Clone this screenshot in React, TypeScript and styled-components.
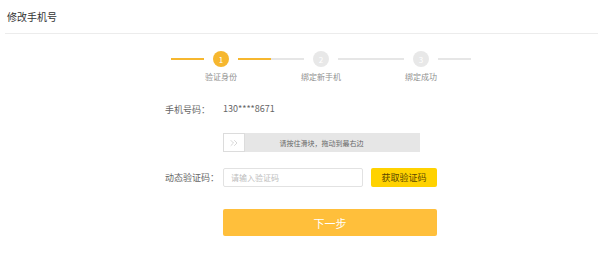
import React from "react";
import styled, { createGlobalStyle } from "styled-components";
import { ChevronsRight } from "lucide-react";

const GlobalStyle = createGlobalStyle`
  html, body {
    margin: 0;
    padding: 0;
    background: #ffffff;
    font-family: "Noto Sans CJK SC", "Noto Sans", sans-serif;
  }
`;

const Page = styled.div`
  width: 600px;
  height: 265px;
  overflow: hidden;
  background: #fff;
`;

const Header = styled.div`
  margin: 0 2px 0 5px;
  height: 33px;
  border-bottom: 1px solid #ececec;
  display: flex;
  align-items: center;
  padding-left: 2px;
  font-size: 10px;
  color: #333;
`;

const Steps = styled.div`
  display: flex;
  margin: 17px 0 0 171px;
`;

const Step = styled.div`
  width: 100px;
  display: flex;
  flex-direction: column;
  align-items: center;
`;

const StepTrack = styled.div`
  width: 100%;
  display: flex;
  align-items: center;
`;

const Line = styled.div<{ active: boolean }>`
  flex: 1;
  height: 1.5px;
  background: ${(p) => (p.active ? "#f6b72f" : "#e6e6e6")};
`;

const Circle = styled.div<{ active: boolean }>`
  width: 16px;
  height: 16px;
  margin: 0 9px;
  border-radius: 50%;
  background: ${(p) => (p.active ? "#f6b72f" : "#e8e8e8")};
  color: #fff;
  font-size: 8px;
  display: flex;
  align-items: center;
  justify-content: center;
`;

const StepLabel = styled.div`
  margin-top: 4px;
  font-size: 8px;
  line-height: 12px;
  color: #8f8f8f;
`;

const Form = styled.div`
  margin-left: 165px;
  width: 272px;
  display: flex;
  flex-direction: column;
`;

const Row = styled.div<{ gap: number }>`
  display: flex;
  align-items: center;
  margin-top: ${(p) => p.gap}px;
`;

const Label = styled.div`
  width: 58px;
  flex-shrink: 0;
  font-size: 9px;
  color: #666;
`;

const Value = styled.div`
  font-size: 9px;
  color: #666;
  line-height: 16px;
`;

const Slider = styled.div`
  position: relative;
  width: 197px;
  height: 19px;
  background: #e6e6e6;
  display: flex;
  align-items: center;
  justify-content: center;
`;

const Handle = styled.div`
  position: absolute;
  left: 0;
  top: 0;
  box-sizing: border-box;
  width: 22px;
  height: 19px;
  background: #fff;
  border: 1px solid #dcdcdc;
  display: flex;
  align-items: center;
  justify-content: center;
  color: #b5b5b5;
`;

const SliderText = styled.div`
  font-size: 7px;
  color: #666;
`;

const Input = styled.input`
  box-sizing: border-box;
  width: 140px;
  height: 19px;
  border: 1px solid #e2e2e2;
  border-radius: 2px;
  padding: 0 7px;
  font-family: inherit;
  font-size: 8px;
  color: #333;
  outline: none;
  &::placeholder {
    color: #bdbdbd;
  }
`;

const CodeButton = styled.button`
  margin-left: 8px;
  width: 66px;
  height: 19px;
  border: none;
  border-radius: 2px;
  background: #ffd200;
  color: #5a4800;
  font-family: inherit;
  font-size: 9px;
  padding: 0;
`;

const NextButton = styled.button`
  width: 214px;
  height: 27px;
  border: none;
  border-radius: 2px;
  background: #ffbf3b;
  color: #fff;
  font-family: inherit;
  font-size: 11px;
  padding: 0;
`;

const steps = ["验证身份", "绑定新手机", "绑定成功"];
const current = 0;

export default function App() {
  return (
    <Page>
      <GlobalStyle />
      <Header>修改手机号</Header>
      <Steps>
        {steps.map((s, i) => (
          <Step key={s}>
            <StepTrack>
              <Line active={i <= current} />
              <Circle active={i <= current}>{i + 1}</Circle>
              <Line active={i <= current} />
            </StepTrack>
            <StepLabel>{s}</StepLabel>
          </Step>
        ))}
      </Steps>
      <Form>
        <Row gap={18}>
          <Label>手机号码：</Label>
          <Value>130****8671</Value>
        </Row>
        <Row gap={16}>
          <Label />
          <Slider>
            <Handle>
              <ChevronsRight size={12} strokeWidth={1.1} />
            </Handle>
            <SliderText>请按住滑块，拖动到最右边</SliderText>
          </Slider>
        </Row>
        <Row gap={16}>
          <Label>动态验证码：</Label>
          <Input placeholder="请输入验证码" />
          <CodeButton>获取验证码</CodeButton>
        </Row>
        <Row gap={22}>
          <Label />
          <NextButton>下一步</NextButton>
        </Row>
      </Form>
    </Page>
  );
}
